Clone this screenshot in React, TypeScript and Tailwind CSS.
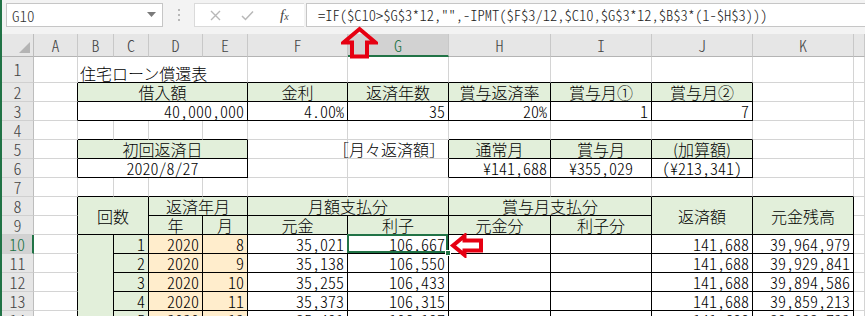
import React from "react";

type Side = "k" | "g";
const RB: Record<Side, string> = { k: "border-r-black", g: "border-r-[#d4d4d4]" };
const BB: Record<Side, string> = { k: "border-b-black", g: "border-b-[#d4d4d4]" };
const AL = {
  l: "justify-start pl-[2px]",
  r: "justify-end pr-[3px]",
  c: "justify-center",
  n: "",
};
const BG = { w: "bg-white", g: "bg-[#e2efda]", o: "bg-[#ffedcc]" };
const NUM = "[font-feature-settings:'hwid']";

function C({
  r = "g",
  b = "g",
  a = "n",
  bg = "w",
  span = "",
  n = false,
  extra = "",
  children,
}: {
  r?: Side;
  b?: Side;
  a?: keyof typeof AL;
  bg?: keyof typeof BG;
  span?: string;
  n?: boolean;
  extra?: string;
  children?: React.ReactNode;
}) {
  return (
    <div
      className={`flex items-center whitespace-nowrap leading-[18px] border-r border-b ${RB[r]} ${BB[b]} ${AL[a]} ${BG[bg]} ${span} ${n ? NUM : ""} ${extra}`}
    >
      {children}
    </div>
  );
}

function RH({ n, sel = false }: { n: number; sel?: boolean }) {
  return (
    <div
      className={`flex items-center justify-center text-[16px] leading-[17px] border-b border-b-[#d0d0d0] ${NUM} ${
        sel
          ? "bg-[#d2d2d2] text-[#217346] border-r-2 border-r-[#217346]"
          : "bg-[#e6e6e6] text-[#444] border-r border-r-[#bdbdbd]"
      }`}
    >
      {n}
    </div>
  );
}

function CH({ l, sel = false }: { l: string; sel?: boolean }) {
  return (
    <div
      className={`flex items-center justify-center text-[16px] leading-none border-r border-r-[#c8c8c8] ${NUM} ${
        sel
          ? "bg-[#d2d2d2] text-[#217346] border-b-2 border-b-[#217346]"
          : "bg-[#e6e6e6] text-[#444] border-b border-b-[#b4b4b4]"
      }`}
    >
      {l}
    </div>
  );
}

const data = [
  [10, "1", "2020", "8", "35,021", "106,667", "141,688", "39,964,979"],
  [11, "2", "2020", "9", "35,138", "106,550", "141,688", "39,929,841"],
  [12, "3", "2020", "10", "35,255", "106,433", "141,688", "39,894,586"],
  [13, "4", "2020", "11", "35,373", "106,315", "141,688", "39,859,213"],
  [14, "5", "2020", "12", "35,491", "106,197", "141,688", "39,823,722"],
] as const;

export default function App() {
  return (
    <div className="relative flex w-[865px] h-[316px] overflow-hidden bg-white font-['Noto_Sans_CJK_JP',sans-serif] font-light text-black">
      <div className="w-[2px] shrink-0 bg-[#217346]" />
      <div className="flex-1 flex flex-col min-w-0">
        {/* formula bar */}
        <div className="h-[34px] shrink-0 bg-[#f3f3f3] flex items-start pt-[3px]">
          <div className="ml-[4px] w-[157px] h-[24px] bg-white border border-[#c6c6c6] flex items-center justify-between pl-[5px] pr-[6px]">
            <span className={`text-[15px] text-[#333] leading-none ${NUM}`}>G10</span>
            <svg width="9" height="6" viewBox="0 0 9 6">
              <polygon points="0,0 9,0 4.5,5" fill="#7a7a7a" />
            </svg>
          </div>
          <div className="w-[31px] h-[24px] flex flex-col items-center justify-center gap-[3px]">
            <div className="w-[2px] h-[2px] bg-[#b8b8b8]" />
            <div className="w-[2px] h-[2px] bg-[#b8b8b8]" />
            <div className="w-[2px] h-[2px] bg-[#b8b8b8]" />
          </div>
          <div className="w-[110px] h-[24px] bg-white border border-[#dadada] border-r-0 flex items-center">
            <svg className="ml-[15px]" width="11" height="11" viewBox="0 0 11 11">
              <path d="M1 1 L10 10 M10 1 L1 10" stroke="#b8b8b8" strokeWidth="1.4" />
            </svg>
            <svg className="ml-[20px]" width="13" height="11" viewBox="0 0 13 11">
              <path d="M1 6 L4.5 9.5 L12 1.5" stroke="#b8b8b8" strokeWidth="1.5" fill="none" />
            </svg>
            <span className="ml-[26px] font-['Liberation_Serif',serif] font-normal italic text-[15px] text-[#444] leading-none">
              f<span className="text-[10px]">x</span>
            </span>
          </div>
          <div className="flex-1 ml-[2px] h-[24px] bg-white border border-[#c6c6c6] border-r-0 flex items-center pl-[11px]">
            <span className={`text-[14.5px] leading-none text-[#222] whitespace-nowrap ${NUM}`}>
              =IF($C10&gt;$G$3*12,"",-IPMT($F$3/12,$C10,$G$3*12,$B$3*(1-$H$3)))
            </span>
          </div>
        </div>

        {/* sheet */}
        <div className="grid grid-cols-[32px_44px_36px_35px_54px_45px_100px_101px_102px_101px_101px_101px_1fr] grid-rows-[23px_26px_repeat(13,19px)] text-[16px]">
          {/* column headers */}
          <div className="relative bg-[#e6e6e6] border-r border-r-[#bdbdbd] border-b border-b-[#b4b4b4]">
            <svg className="absolute right-[3px] bottom-[3px]" width="11" height="11" viewBox="0 0 11 11">
              <polygon points="11,0 11,11 0,11" fill="#b4b4b4" />
            </svg>
          </div>
          <CH l="A" />
          <CH l="B" />
          <CH l="C" />
          <CH l="D" />
          <CH l="E" />
          <CH l="F" />
          <CH l="G" sel />
          <CH l="H" />
          <CH l="I" />
          <CH l="J" />
          <CH l="K" />
          <CH l="" />

          {/* row 1 */}
          <RH n={1} />
          <C />
          <C b="k" a="l" span="col-span-4" extra="items-end">
            住宅ローン償還表
          </C>
          <C b="k" />
          <C b="k" />
          <C b="k" />
          <C b="k" />
          <C b="k" />
          <C />
          <C />

          {/* row 2 */}
          <RH n={2} />
          <C r="k" />
          <C r="k" b="k" a="c" bg="g" span="col-span-4">借入額</C>
          <C r="k" b="k" a="c" bg="g">金利</C>
          <C r="k" b="k" a="c" bg="g">返済年数</C>
          <C r="k" b="k" a="c" bg="g">賞与返済率</C>
          <C r="k" b="k" a="c" bg="g">賞与月①</C>
          <C r="k" b="k" a="c" bg="g">賞与月②</C>
          <C />
          <C />

          {/* row 3 */}
          <RH n={3} />
          <C r="k" />
          <C r="k" b="k" a="r" n span="col-span-4">40,000,000</C>
          <C r="k" b="k" a="r" n>4.00%</C>
          <C r="k" b="k" a="r" n>35</C>
          <C r="k" b="k" a="r" n>20%</C>
          <C r="k" b="k" a="r" n>1</C>
          <C r="k" b="k" a="r" n>7</C>
          <C />
          <C />

          {/* row 4 */}
          <RH n={4} />
          <C />
          <C b="k" />
          <C b="k" />
          <C b="k" />
          <C b="k" />
          <C />
          <C />
          <C b="k" />
          <C b="k" />
          <C b="k" />
          <C />
          <C />

          {/* row 5 */}
          <RH n={5} />
          <C r="k" />
          <C r="k" b="k" a="c" bg="g" span="col-span-4">初回返済日</C>
          <C />
          <C r="k" a="r" extra="pr-[1px]">［月々返済額］</C>
          <C r="k" b="k" a="c" bg="g">通常月</C>
          <C r="k" b="k" a="c" bg="g">賞与月</C>
          <C r="k" b="k" a="c" bg="g">(加算額)</C>
          <C />
          <C />

          {/* row 6 */}
          <RH n={6} />
          <C r="k" />
          <C r="k" b="k" a="c" n span="col-span-4">2020/8/27</C>
          <C />
          <C r="k" />
          <C r="k" b="k" a="r" n>¥141,688</C>
          <C r="k" b="k" a="c" n>¥355,029</C>
          <C r="k" b="k" a="c" n>(¥213,341)</C>
          <C />
          <C />

          {/* row 7 */}
          <RH n={7} />
          <C />
          <C b="k" />
          <C b="k" />
          <C b="k" />
          <C b="k" />
          <C b="k" />
          <C b="k" />
          <C b="k" />
          <C b="k" />
          <C b="k" />
          <C b="k" />
          <C />

          {/* row 8 */}
          <RH n={8} />
          <C r="k" />
          <C r="k" b="k" a="c" bg="g" span="col-span-2 row-span-2">回数</C>
          <C r="k" b="k" a="c" bg="g" span="col-span-2">返済年月</C>
          <C r="k" b="k" a="c" bg="g" span="col-span-2">月額支払分</C>
          <C r="k" b="k" a="c" bg="g" span="col-span-2">賞与月支払分</C>
          <C r="k" b="k" a="c" bg="g" span="row-span-2">返済額</C>
          <C r="k" b="k" a="c" bg="g" span="row-span-2">元金残高</C>
          <C />

          {/* row 9 */}
          <RH n={9} />
          <C r="k" />
          <C r="k" b="k" a="c" bg="g">年</C>
          <C r="k" b="k" a="c" bg="g">月</C>
          <C r="k" b="k" a="c" bg="g">元金</C>
          <C r="k" b="k" a="c" bg="g">利子</C>
          <C r="k" b="k" a="c" bg="g">元金分</C>
          <C r="k" b="k" a="c" bg="g">利子分</C>
          <C />

          {/* rows 10-14 */}
          {data.map((d, i) => (
            <React.Fragment key={d[0]}>
              <RH n={d[0]} sel={i === 0} />
              <C r="k" />
              {i === 0 && <C r="k" b="k" bg="g" span="row-span-5" />}
              <C r="k" b="k" a="r" bg="g" n>{d[1]}</C>
              <C r="k" b="k" a="r" bg="o" n>{d[2]}</C>
              <C r="k" b="k" a="r" bg="o" n>{d[3]}</C>
              <C r="k" b="k" a="r" n>{d[4]}</C>
              {i === 0 ? (
                <div className={`relative flex items-center justify-end pr-[3px] leading-[18px] bg-white border-r border-b border-r-black border-b-black ${NUM}`}>
                  {d[5]}
                  <div className="absolute -top-px -left-px right-0 bottom-0 border-2 border-[#217346]" />
                  <div className="absolute -right-[3px] -bottom-[3px] w-[6px] h-[6px] bg-[#217346] border border-white" />
                </div>
              ) : (
                <C r="k" b="k" a="r" n>{d[5]}</C>
              )}
              <C r="k" b="k" />
              <C r="k" b="k" />
              <C r="k" b="k" a="r" n>{d[6]}</C>
              <C r="k" b="k" a="r" n>{d[7]}</C>
              <C />
            </React.Fragment>
          ))}
        </div>
      </div>

      {/* red arrows */}
      <svg className="absolute left-[341px] top-[26px]" width="37" height="33" viewBox="0 0 37 33">
        <path
          d="M18.5 3 L34.5 16.5 L26 16.5 L26 30.5 L11 30.5 L11 16.5 L2.5 16.5 Z"
          fill="none"
          stroke="#e60012"
          strokeWidth="4"
          strokeLinejoin="miter"
        />
      </svg>
      <svg className="absolute left-[449px] top-[233px]" width="36" height="25" viewBox="0 0 36 25">
        <path
          d="M4 12.5 L15.5 3 L15.5 7.5 L32 7.5 L32 17.5 L15.5 17.5 L15.5 22 Z"
          fill="none"
          stroke="#e60012"
          strokeWidth="4"
          strokeLinejoin="miter"
        />
      </svg>
    </div>
  );
}
